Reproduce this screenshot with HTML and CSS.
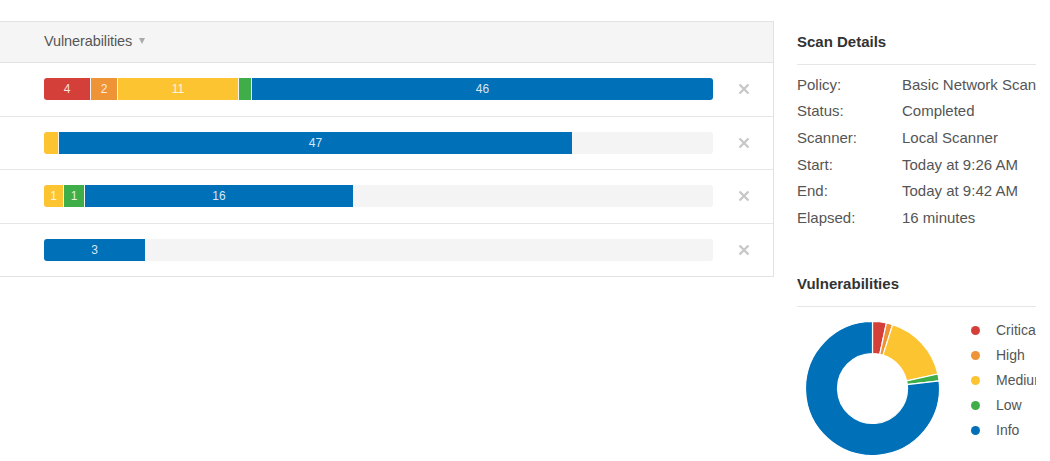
FILE: index.html
```html
<!DOCTYPE html>
<html>
<head>
<meta charset="utf-8">
<title>Scan</title>
<link rel="stylesheet" href="styles.css">
</head>
<body>
<div class="page">
  <section class="hosts">
    <div class="hosts-head">
      <span class="col-title">Vulnerabilities</span><span class="sort-caret"></span>
    </div>
    <div class="host-row">
      <div class="track">
        <span class="seg critical" style="width:46px">4</span>
        <span class="seg high" style="width:26px">2</span>
        <span class="seg medium" style="width:120px">11</span>
        <span class="seg low" style="width:12px"></span>
        <span class="seg info" style="width:461px">46</span>
      </div>
      <div class="remove"><svg width="12" height="12" viewBox="0 0 12 12"><path d="M1.5 1.5L10.5 10.5M10.5 1.5L1.5 10.5"/></svg></div>
    </div>
    <div class="host-row">
      <div class="track">
        <span class="seg medium" style="width:14px"></span>
        <span class="seg info" style="width:513px">47</span>
      </div>
      <div class="remove"><svg width="12" height="12" viewBox="0 0 12 12"><path d="M1.5 1.5L10.5 10.5M10.5 1.5L1.5 10.5"/></svg></div>
    </div>
    <div class="host-row">
      <div class="track">
        <span class="seg medium" style="width:19px">1</span>
        <span class="seg low" style="width:20px">1</span>
        <span class="seg info" style="width:268px">16</span>
      </div>
      <div class="remove"><svg width="12" height="12" viewBox="0 0 12 12"><path d="M1.5 1.5L10.5 10.5M10.5 1.5L1.5 10.5"/></svg></div>
    </div>
    <div class="host-row">
      <div class="track">
        <span class="seg info" style="width:101px">3</span>
      </div>
      <div class="remove"><svg width="12" height="12" viewBox="0 0 12 12"><path d="M1.5 1.5L10.5 10.5M10.5 1.5L1.5 10.5"/></svg></div>
    </div>
  </section>

  <aside class="side">
    <h3 class="side-title">Scan Details</h3>
    <dl class="details">
      <div class="drow"><dt>Policy:</dt><dd>Basic Network Scan</dd></div>
      <div class="drow"><dt>Status:</dt><dd>Completed</dd></div>
      <div class="drow"><dt>Scanner:</dt><dd>Local Scanner</dd></div>
      <div class="drow"><dt>Start:</dt><dd>Today at 9:26 AM</dd></div>
      <div class="drow"><dt>End:</dt><dd>Today at 9:42 AM</dd></div>
      <div class="drow"><dt>Elapsed:</dt><dd>16 minutes</dd></div>
    </dl>
    <h3 class="side-title second">Vulnerabilities</h3>
    <div class="chart">
      <svg class="donut" width="135" height="135" viewBox="0 0 135 135">
        <path fill="#d43f3a" d="M67.5,0.5 A67,67 0 0 1 81.43,1.97 L74.78,33.27 A35,35 0 0 0 67.5,32.5 Z"/>
        <path fill="#ee9336" d="M81.43,1.97 A67,67 0 0 1 87.65,3.60 L78.02,34.12 A35,35 0 0 0 74.78,33.27 Z"/>
        <path fill="#fdc431" d="M87.65,3.60 A67,67 0 0 1 132.91,53.00 L101.67,59.93 A35,35 0 0 0 78.02,34.12 Z"/>
        <path fill="#3fae49" d="M132.91,53.00 A67,67 0 0 1 134.07,59.92 L102.28,63.54 A35,35 0 0 0 101.67,59.93 Z"/>
        <path fill="#0071b9" d="M134.07,59.92 A67,67 0 1 1 67.5,0.5 L67.5,32.5 A35,35 0 1 0 102.28,63.54 Z"/>
      </svg>
      <ul class="legend">
        <li><span class="dot critical"></span>Critical</li>
        <li><span class="dot high"></span>High</li>
        <li><span class="dot medium"></span>Medium</li>
        <li><span class="dot low"></span>Low</li>
        <li><span class="dot info"></span>Info</li>
      </ul>
    </div>
  </aside>
</div>
</body>
</html>
```

FILE: styles.css
```css
html, body {
  margin: 0;
  padding: 0;
  background: #fff;
}
body {
  font-family: "Liberation Sans", Arial, sans-serif;
  color: #555;
  width: 1050px;
  height: 461px;
  overflow: hidden;
}
.page {
  display: flex;
  align-items: flex-start;
  padding-top: 21px;
}

/* hosts table */
.hosts {
  width: 773px;
  flex: none;
  border-top: 1px solid #e2e2e2;
  border-right: 1px solid #e2e2e2;
  border-bottom: 1px solid #e2e2e2;
}
.hosts-head {
  height: 41px;
  box-sizing: border-box;
  padding-bottom: 3px;
  background: #f5f5f5;
  border-bottom: 1px solid #e2e2e2;
  display: flex;
  align-items: center;
  padding-left: 44px;
}
.col-title {
  font-size: 14.5px;
  color: #555;
  letter-spacing: -0.1px;
}
.sort-caret {
  width: 0;
  height: 0;
  margin-left: 7px;
  margin-top: 1px;
  border-left: 3.5px solid transparent;
  border-right: 3.5px solid transparent;
  border-top: 6px solid #aaa;
}
.host-row {
  height: 52.5px;
  display: flex;
  align-items: center;
  padding-left: 44px;
  border-top: 1px solid #e6e6e6;
}
.hosts-head + .host-row {
  border-top: none;
}
.track {
  width: 669px;
  height: 22px;
  background: #f4f4f4;
  border-radius: 3px;
  display: flex;
  overflow: hidden;
}
.seg {
  flex: none;
  height: 22px;
  line-height: 22px;
  margin-right: 1px;
  font-size: 12px;
  color: rgba(255, 255, 255, 0.85);
  text-align: center;
  overflow: hidden;
}
.seg:last-child {
  margin-right: 0;
}
.critical { background: #d43f3a; }
.high { background: #ee9336; }
.medium { background: #fdc431; }
.low { background: #3fae49; }
.info { background: #0071b9; }

.remove {
  flex: 1;
  display: flex;
  justify-content: center;
  align-items: center;
  padding-left: 1px;
}
.remove svg path {
  stroke: #c8c8c8;
  stroke-width: 2.4;
  fill: none;
}

/* side panel */
.side {
  width: 239px;
  flex: none;
  margin-left: 23px;
  overflow: hidden;
}
.side-title {
  margin: 0;
  font-size: 15px;
  font-weight: bold;
  color: #333;
  height: 42px;
  line-height: 42px;
  padding-bottom: 1px;
  border-bottom: 1px solid #e6e6e6;
  white-space: nowrap;
}
.side-title.second {
  margin-top: 31px;
}
.details {
  margin: 0;
  padding-top: 6.5px;
}
.drow {
  display: flex;
  height: 26.7px;
  line-height: 26.7px;
  font-size: 15px;
  color: #555;
  white-space: nowrap;
}
.drow dt {
  width: 105px;
  flex: none;
}
.drow dd {
  margin: 0;
}
.chart {
  display: flex;
  align-items: flex-start;
}
.donut {
  display: block;
  flex: none;
  margin-left: 8px;
  margin-top: 14.5px;
}
.donut path {
  stroke: #fff;
  stroke-width: 1.2;
}
.legend {
  list-style: none;
  margin: 11px 0 0 31px;
  padding: 0;
}
.legend li {
  height: 25px;
  line-height: 25px;
  font-size: 14px;
  color: #555;
  display: flex;
  align-items: center;
  white-space: nowrap;
}
.dot {
  width: 9px;
  height: 9px;
  border-radius: 50%;
  margin-right: 16px;
  flex: none;
}
```
